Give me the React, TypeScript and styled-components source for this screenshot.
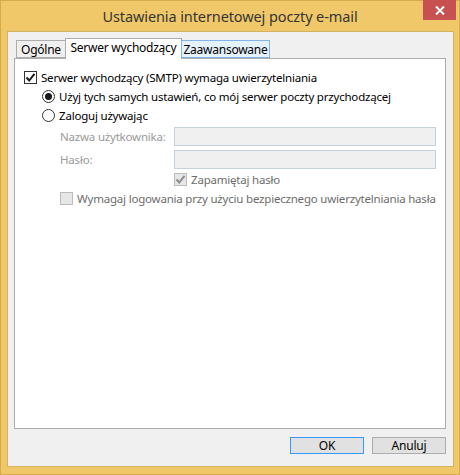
import React from 'react';
import styled, { createGlobalStyle } from 'styled-components';

const GlobalStyle = createGlobalStyle`
  html, body {
    margin: 0;
    padding: 0;
    background: #ffffff;
  }
  body {
    font-family: "Segoe UI", "Noto Sans", sans-serif;
    font-size: 11.5px;
    letter-spacing: -0.2px;
    color: #000000;
  }
`;

const Window = styled.div`
  width: 460px;
  height: 475px;
  box-sizing: border-box;
  background: #f0c86a;
  border: 1px solid #d6ab4c;
  display: flex;
  flex-direction: column;
`;

const TitleBar = styled.div`
  height: 30px;
  display: grid;
  grid-template-columns: 1fr auto 1fr;
  align-items: start;
`;

const Title = styled.div`
  grid-column: 2;
  font-size: 14.5px;
  letter-spacing: -0.1px;
  color: #353535;
  line-height: 30px;
  white-space: nowrap;
`;

const CloseButton = styled.div`
  grid-column: 3;
  justify-self: end;
  margin-right: 3px;
  margin-top: -1px;
  width: 33px;
  height: 20px;
  background: #c75050;
  display: flex;
  align-items: center;
  justify-content: center;
`;

const Client = styled.div`
  flex: 1;
  margin: 0 5px 7px 6px;
  background: #f0f0f0;
  border: 1px solid #d2b35f;
  display: flex;
  flex-direction: column;
  padding: 6px 7px 12px 6px;
`;

const TabStrip = styled.div`
  display: flex;
  align-items: flex-end;
  height: 20px;
  padding-left: 2px;
  position: relative;
  z-index: 1;
`;

const Tab = styled.div<{ $active?: boolean; $hover?: boolean; $w: number }>`
  box-sizing: border-box;
  width: ${p => p.$w}px;
  height: ${p => (p.$active ? '21px' : '18px')};
  margin-bottom: ${p => (p.$active ? '-1px' : '0')};
  padding-top: 1px;
  text-align: center;
  font-size: 12px;
  letter-spacing: -0.25px;
  background: ${p => (p.$active ? '#ffffff' : p.$hover ? '#e5f1fb' : '#f0f0f0')};
  border: 1px solid ${p => (p.$hover ? '#7eb4ea' : '#adadad')};
  border-bottom: ${p => (p.$active ? 'none' : undefined)};
  margin-right: ${p => (p.$active ? '-1px' : '0')};
  margin-left: ${p => (p.$active ? '-1px' : '0')};
  line-height: 15px;
  white-space: nowrap;
`;

const Panel = styled.div`
  flex: 1;
  background: #ffffff;
  border: 1px solid #adadad;
  padding: 9px 9px;
  display: flex;
  flex-direction: column;
`;

const Row = styled.label<{ $indent?: number; $disabled?: boolean; $gapTop?: number }>`
  display: flex;
  align-items: center;
  gap: 4px;
  height: 19px;
  margin-top: ${p => p.$gapTop ?? 0}px;
  padding-left: ${p => p.$indent ?? 0}px;
  white-space: nowrap;
  color: ${p => (p.$disabled ? '#6d6d6d' : '#000000')};
`;

const Box = styled.span<{ $disabled?: boolean }>`
  box-sizing: border-box;
  width: 13px;
  height: 13px;
  border: 1px solid ${p => (p.$disabled ? '#bcbcbc' : '#333333')};
  background: ${p => (p.$disabled ? '#e6e6e6' : '#ffffff')};
  display: flex;
  align-items: center;
  justify-content: center;
  flex-shrink: 0;
`;

const Radio = styled.span`
  box-sizing: border-box;
  width: 13px;
  height: 13px;
  border-radius: 50%;
  border: 1px solid #333333;
  background: #ffffff;
  display: flex;
  align-items: center;
  justify-content: center;
  flex-shrink: 0;
`;

const Dot = styled.span`
  width: 7px;
  height: 7px;
  border-radius: 50%;
  background: #1a1a1a;
`;

const FieldGrid = styled.div`
  display: grid;
  grid-template-columns: 114px 1fr;
  row-gap: 4px;
  padding-left: 36px;
  margin-top: 2px;
  align-items: center;
`;

const FieldLabel = styled.span`
  color: #9a9a9a;
  white-space: nowrap;
`;

const Input = styled.div`
  box-sizing: border-box;
  height: 19px;
  background: #f0f0f0;
  border: 1px solid #c4d2df;
`;

const Footer = styled.div`
  display: flex;
  justify-content: flex-end;
  gap: 8px;
  padding-top: 8px;
`;

const Button = styled.div<{ $default?: boolean }>`
  box-sizing: border-box;
  width: 74px;
  height: 17px;
  background: #e1e1e1;
  border: 1px solid ${p => (p.$default ? '#3399ff' : '#adadad')};
  display: flex;
  align-items: center;
  justify-content: center;
  font-size: 12px;
  line-height: 15px;
`;

const Check = ({ color }: { color: string }) => (
  <svg width="11" height="11" viewBox="0 0 11 11">
    <path d="M1.5 5.5 L4.2 8.5 L9.5 1.8" fill="none" stroke={color} strokeWidth="2" />
  </svg>
);

const App: React.FC = () => {
  return (
    <>
      <GlobalStyle />
      <Window>
        <TitleBar>
          <Title>Ustawienia internetowej poczty e-mail</Title>
          <CloseButton>
            <svg width="10" height="9" viewBox="0 0 10 9">
              <path d="M1 0.5 L9 8.5 M9 0.5 L1 8.5" stroke="#ffffff" strokeWidth="2" />
            </svg>
          </CloseButton>
        </TitleBar>
        <Client>
          <TabStrip>
            <Tab $w={50}>Ogólne</Tab>
            <Tab $w={117} $active>Serwer wychodzący</Tab>
            <Tab $w={89} $hover>Zaawansowane</Tab>
          </TabStrip>
          <Panel>
            <Row>
              <Box>
                <Check color="#1a1a1a" />
              </Box>
              Serwer wychodzący (SMTP) wymaga uwierzytelniania
            </Row>
            <Row $indent={18}>
              <Radio>
                <Dot />
              </Radio>
              Użyj tych samych ustawień, co mój serwer poczty przychodzącej
            </Row>
            <Row $indent={18}>
              <Radio />
              Zaloguj używając
            </Row>
            <FieldGrid>
              <FieldLabel>Nazwa użytkownika:</FieldLabel>
              <Input />
              <FieldLabel>Hasło:</FieldLabel>
              <Input />
            </FieldGrid>
            <Row $indent={150} $disabled $gapTop={1}>
              <Box $disabled>
                <Check color="#8c8c8c" />
              </Box>
              Zapamiętaj hasło
            </Row>
            <Row $indent={36} $disabled>
              <Box $disabled />
              Wymagaj logowania przy użyciu bezpiecznego uwierzytelniania hasła
            </Row>
          </Panel>
          <Footer>
            <Button $default>OK</Button>
            <Button>Anuluj</Button>
          </Footer>
        </Client>
      </Window>
    </>
  );
};

export default App;
